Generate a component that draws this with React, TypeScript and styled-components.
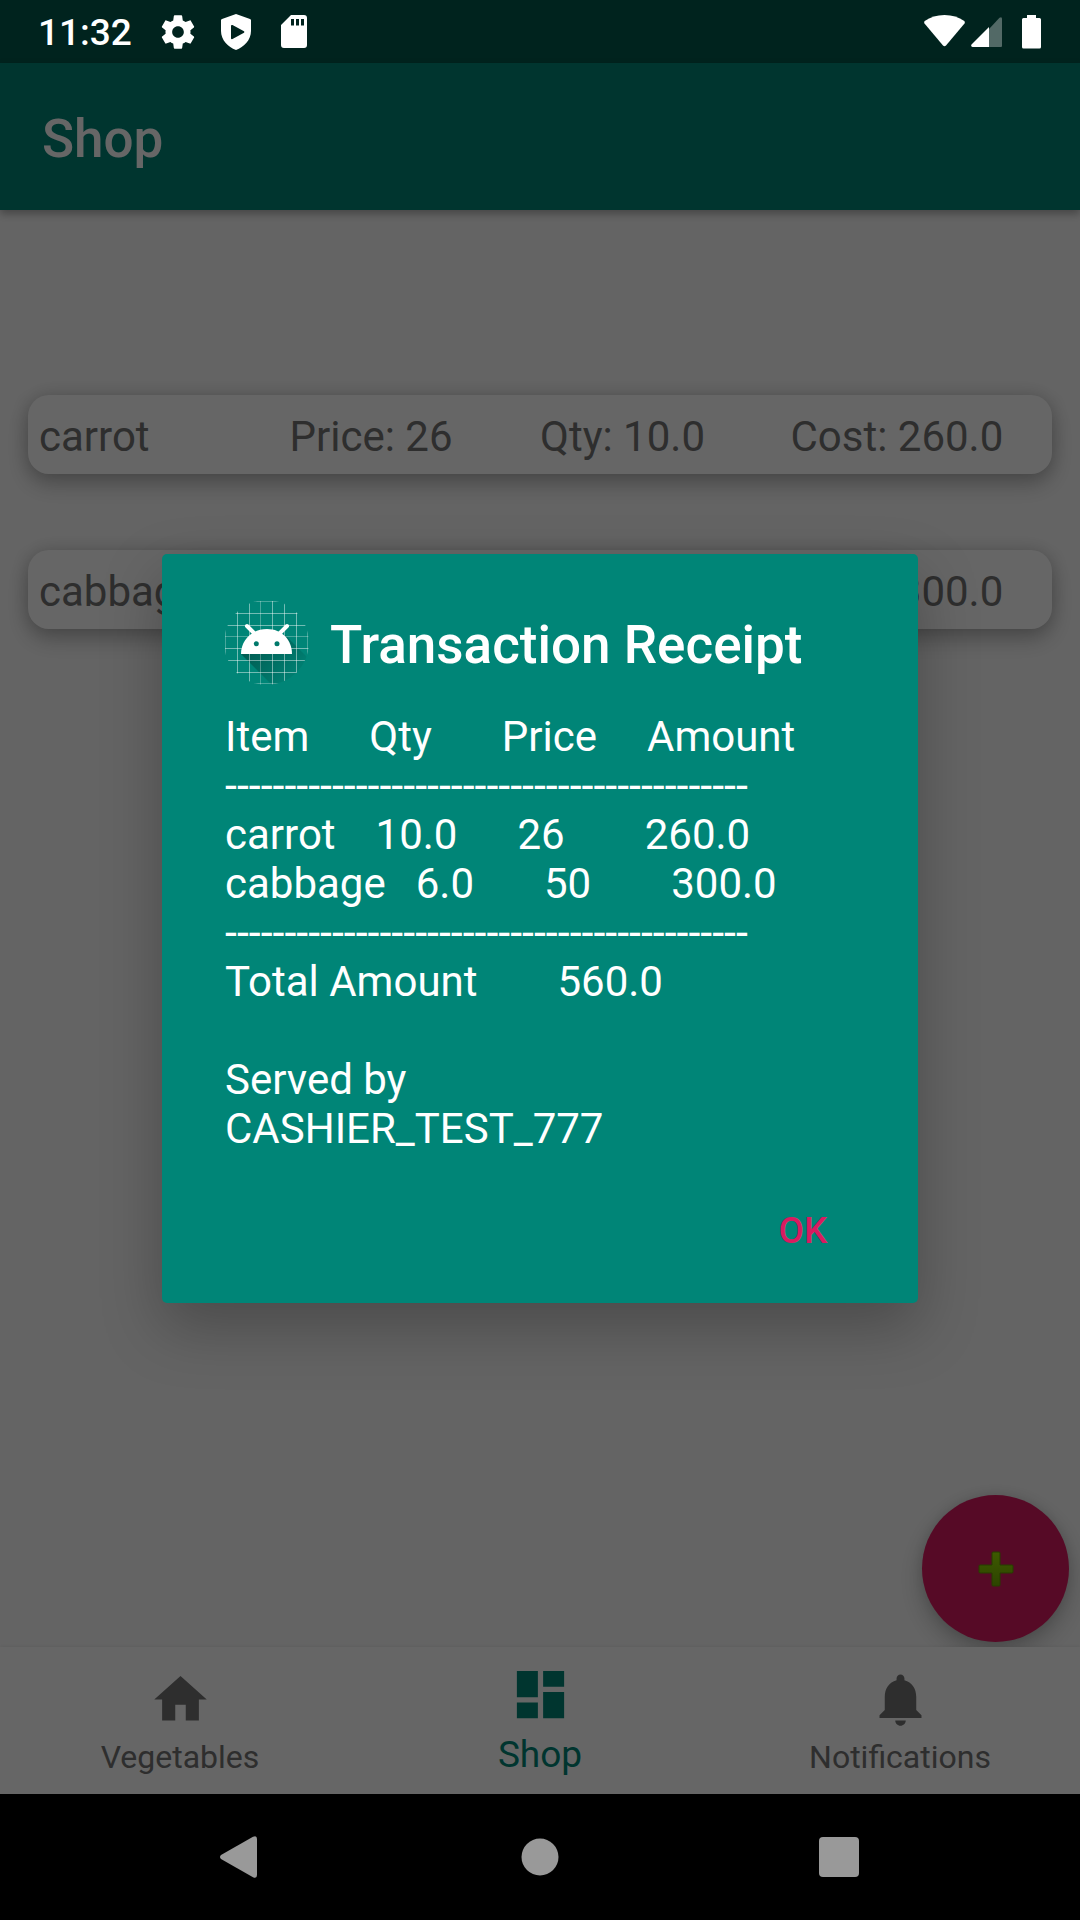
import React from "react";
import styled, { createGlobalStyle } from "styled-components";

const GlobalStyle = createGlobalStyle`
  *, *::before, *::after { box-sizing: border-box; }
  body { margin: 0; background: #000; font-family: Roboto, "Noto Sans", sans-serif; }
  button { font-family: inherit; border: 0; padding: 0; background: none; cursor: pointer; }
  svg { display: block; }
`;

const Device = styled.div`
  min-height: 100vh;
  display: flex;
  flex-direction: column;
`;

const StatusBar = styled.header`
  height: 63px;
  padding: 0 39px 0 38px;
  display: flex;
  align-items: center;
  justify-content: space-between;
  background: #00231e;
  color: #fff;
`;

const StatusGroup = styled.div<{ $gap: number }>`
  display: flex;
  align-items: center;
  gap: ${(p) => p.$gap}px;
`;

const StatusSlot = styled.span`
  width: 58px;
  display: flex;
  justify-content: center;
`;

const Clock = styled.time`
  font-size: 37px;
  font-weight: 500;
  line-height: 44px;
  padding-top: 2px;
  margin-right: 17px;
`;

const Screen = styled.div`
  position: relative;
  flex: 1;
  display: flex;
  flex-direction: column;
  background: #fafafa;
`;

const AppBar = styled.div`
  height: 147px;
  padding: 0 42px;
  display: flex;
  align-items: center;
  background: #008577;
  box-shadow: 0 4px 8px rgba(0, 0, 0, 0.3);
`;

const AppTitle = styled.h1`
  margin: 0;
  padding-top: 4px;
  color: #fff;
  font-size: 53px;
  font-weight: 500;
  line-height: 62px;
`;

const Content = styled.main`
  position: relative;
  flex: 1;
  overflow: hidden;
`;

const ItemList = styled.ul`
  list-style: none;
  margin: 0;
  padding: 185px 28px 0;
  display: flex;
  flex-direction: column;
  gap: 76px;
`;

const ItemCard = styled.li`
  height: 79px;
  padding: 4px 11px 0;
  display: grid;
  grid-template-columns: repeat(4, 1fr);
  align-items: center;
  border-radius: 21px;
  background: #fff;
  color: #737373;
  font-size: 42px;
  line-height: 49px;
  white-space: nowrap;
  box-shadow: 0 10px 22px rgba(0, 0, 0, 0.24), 0 0 18px rgba(0, 0, 0, 0.14);
`;

const AddButton = styled.button`
  position: absolute;
  right: 11px;
  bottom: 5px;
  width: 147px;
  height: 147px;
  border-radius: 50%;
  display: grid;
  place-items: center;
  background: #d81b60;
  box-shadow: 0 10px 24px rgba(0, 0, 0, 0.24), 0 0 12px rgba(0, 0, 0, 0.1);
`;

const BottomNav = styled.nav`
  height: 147px;
  display: grid;
  grid-template-columns: repeat(3, 1fr);
  background: #fff;
  box-shadow: 0 -1px 3px rgba(0, 0, 0, 0.06);
`;

const NavItem = styled.button<{ $active?: boolean }>`
  display: flex;
  flex-direction: column;
  align-items: center;
  justify-content: flex-end;
  gap: ${(p) => (p.$active ? 8 : 7)}px;
  padding-bottom: 18px;
  color: ${(p) => (p.$active ? "#008577" : "#737373")};
  font-size: ${(p) => (p.$active ? 37 : 32)}px;
  line-height: ${(p) => (p.$active ? 42 : 38)}px;
`;

const Overlay = styled.div`
  position: absolute;
  inset: 0;
  display: grid;
  place-items: center;
  background: rgba(0, 0, 0, 0.6);
`;

const Dialog = styled.section`
  width: 70%;
  padding: 47px 31px 10px 63px;
  border-radius: 5px;
  background: #008577;
  color: #fff;
  box-shadow: 0 24px 60px rgba(0, 0, 0, 0.26);
`;

const DialogHeader = styled.div`
  display: flex;
  align-items: center;
  gap: 21px;
  margin-bottom: 27px;
`;

const DialogTitle = styled.h2`
  margin: 0;
  padding-top: 4px;
  font-size: 53px;
  font-weight: 500;
  line-height: 62px;
  white-space: nowrap;
`;

const Receipt = styled.div`
  font-size: 42px;
  line-height: 49px;
  white-space: nowrap;
`;

const ReceiptLine = styled.div`
  display: flex;
  height: 49px;
`;

const RuleLine = styled(ReceiptLine)`
  font-size: 43px;
`;

/* $spaces: how many 10px blanks precede the value on a receipt line */
const Cell = styled.span<{ $spaces: number }>`
  margin-left: ${(p) => p.$spaces * 10}px;
`;

const DialogActions = styled.div`
  display: flex;
  justify-content: flex-end;
  margin-top: 14px;
`;

const TextButton = styled.button`
  min-width: 168px;
  height: 126px;
  padding-top: 2px;
  color: #d81b60;
  font-size: 37px;
  font-weight: 500;
  line-height: 44px;
`;

const SystemBar = styled.footer`
  height: 126px;
  padding: 0 92px;
  display: grid;
  grid-template-columns: repeat(3, 1fr);
  background: #000;
  color: #999;
`;

const SystemButton = styled.button`
  display: grid;
  place-items: center;
  color: inherit;
`;

type GlyphProps = { d: string; size: number };

const Glyph = ({ d, size }: GlyphProps) => (
  <svg width={size} height={size} viewBox="0 0 24 24" fill="currentColor" aria-hidden="true">
    <path d={d} />
  </svg>
);

const HOME = "M10 20v-6h4v6h5v-8h3L12 3 2 12h3v8z";
const DASHBOARD = "M3 13h8V3H3v10zm0 8h8v-6H3v6zm10 0h8V11h-8v10zm0-18v6h8V3h-8z";
const BELL =
  "M12 22c1.1 0 2-.9 2-2h-4c0 1.1.9 2 2 2zm6-6v-5c0-3.07-1.63-5.64-4.5-6.32V4c0-.83-.67-1.5-1.5-1.5s-1.5.67-1.5 1.5v.68C7.64 5.36 6 7.92 6 11v5l-2 2v1h16v-1l-2-2z";
const GEAR =
  "M19.43 12.98c.04-.32.07-.64.07-.98s-.03-.66-.07-.98l2.11-1.65c.19-.15.24-.42.12-.64l-2-3.46c-.12-.22-.39-.3-.61-.22l-2.49 1c-.52-.4-1.08-.73-1.69-.98l-.38-2.65C14.46 2.18 14.25 2 14 2h-4c-.25 0-.46.18-.49.42l-.38 2.65c-.61.25-1.17.59-1.69.98l-2.49-1c-.23-.09-.49 0-.61.22l-2 3.46c-.13.22-.07.49.12.64l2.11 1.65c-.04.32-.07.65-.07.98s.03.66.07.98l-2.11 1.65c-.19.15-.24.42-.12.64l2 3.46c.12.22.39.3.61.22l2.49-1c.52.4 1.08.73 1.69.98l.38 2.65c.03.24.24.42.49.42h4c.25 0 .46-.18.49-.42l.38-2.65c.61-.25 1.17-.59 1.69-.98l2.49 1c.23.09.49 0 .61-.22l2-3.46c.12-.22.07-.49-.12-.64l-2.11-1.65zM12 15.5c-1.93 0-3.5-1.57-3.5-3.5s1.57-3.5 3.5-3.5 3.5 1.57 3.5 3.5-1.57 3.5-3.5 3.5z";

const ShieldIcon = () => (
  <svg width="30" height="36" viewBox="0 0 30 36" fill="#fff" aria-hidden="true">
    <path fillRule="evenodd" d="M15 0 29 5q1 .4 1 1.500V17C30 26 23 33 15 36 7 33 0 26 0 17V6.500Q0 5.400 1 5ZM10 11.500V24.500q.4 1 1.500.5L23 18.700q.8-.7 0-1.400L11.500 11q-1.200-.4-1.500.5Z" />
  </svg>
);

const SdCardIcon = () => (
  <svg width="26" height="34" viewBox="0 0 26 34" fill="#fff" aria-hidden="true">
    <path fillRule="evenodd" d="M10 0H23q3 0 3 3V30q0 3-3 3H3q-3 0-3-3V10ZM10 4V10.500h3V4ZM15 4V10.500h3V4ZM20 4V10.500h3V4Z" />
  </svg>
);

const WifiIcon = () => (
  <svg width="41" height="34" viewBox="0 0 41 34" fill="#fff" aria-hidden="true">
    <path d="M20.500 0Q32 0 40.300 6q1 1.200.2 2.400L22 30.500q-1.500 1.500-3 0L.5 8.400Q-.3 7.200.7 6 9 0 20.500 0Z" />
  </svg>
);

const SignalIcon = () => (
  <svg width="31" height="34" viewBox="0 0 31 34" fill="#fff" aria-hidden="true">
    <path opacity=".32" d="M18 14 28.500 2.800Q31 1 31 4V31q0 1-1 1H18Z" />
    <path d="M18 12V32H1.500Q-.5 31.500.5 29.500Z" />
  </svg>
);

const BatteryIcon = () => (
  <svg width="19" height="34" viewBox="0 0 19 34" fill="#fff" aria-hidden="true">
    <path d="M5 0h9v3h3.500Q19 3 19 4.500V32q0 1.500-1.500 1.500h-16Q0 33.500 0 32V4.500Q0 3 1.500 3H5Z" />
  </svg>
);

const PlusIcon = () => (
  <svg width="36" height="36" viewBox="0 0 36 36" aria-hidden="true">
    <defs>
      <linearGradient id="plusFill" x1="0" y1="0" x2="0" y2="1">
        <stop offset="0" stopColor="#9be000" />
        <stop offset="1" stopColor="#6fa800" />
      </linearGradient>
    </defs>
    <path
      fill="url(#plusFill)"
      stroke="#5f9400"
      strokeWidth="1"
      d="M15 1h6q1 0 1 1v12h12q1 0 1 1v6q0 1-1 1H22v12q0 1-1 1h-6q-1 0-1-1V22H2q-1 0-1-1v-6q0-1 1-1h12V2q0-1 1-1Z"
    />
  </svg>
);

const GRID_STEPS = [0.5, 12.5, 24.5, 35.5, 47.5, 59.5, 71.5, 82.5];

const AndroidLogo = () => (
  <svg width="84" height="84" viewBox="0 0 84 84" aria-hidden="true">
    <defs>
      <clipPath id="logoDisc">
        <circle cx="41.500" cy="41.500" r="42.500" />
      </clipPath>
      <linearGradient id="logoShade" gradientUnits="userSpaceOnUse" x1="32" y1="44" x2="62" y2="76">
        <stop offset="0" stopColor="#000" stopOpacity=".3" />
        <stop offset="1" stopColor="#000" stopOpacity=".06" />
      </linearGradient>
    </defs>
    <g clipPath="url(#logoDisc)">
      <path d="M16 53 60 34 86 60V84H47Z" fill="url(#logoShade)" />
      {GRID_STEPS.map((p, i) => (
        <path
          key={p}
          d={`M${p} 0V84M0 ${p}H84`}
          stroke="#fff"
          strokeWidth="1"
          strokeOpacity={i === 0 || i === 3 || i === 7 ? 0.28 : 0.45}
        />
      ))}
    </g>
    <path d="M22 25 29 32M62 25 55 32" stroke="#fff" strokeWidth="4" strokeLinecap="round" />
    <path d="M16 53C16 39 27 28 42 28S67 39 67 53Z" fill="#fff" />
    <circle cx="31.300" cy="42.700" r="2.500" fill="#00796b" />
    <circle cx="52" cy="42.700" r="2.500" fill="#00796b" />
  </svg>
);

const items = [
  { name: "carrot", price: "26", qty: "10.0", cost: "260.0" },
  { name: "cabbage", price: "50", qty: "6.0", cost: "300.0" },
];

const RULE = "-".repeat(44);

type ReceiptRow = { cells: string[]; spaces: number[] };

const headerRow: ReceiptRow = { cells: ["Item", "Qty", "Price", "Amount"], spaces: [0, 6, 7, 5] };
const itemRows: ReceiptRow[] = [
  { cells: ["carrot", "10.0", "26", "260.0"], spaces: [0, 4, 6, 8] },
  { cells: ["cabbage", "6.0", "50", "300.0"], spaces: [0, 3, 7, 8] },
];
const totalRow: ReceiptRow = { cells: ["Total Amount", "560.0"], spaces: [0, 8] };

const Line = ({ row }: { row: ReceiptRow }) => (
  <ReceiptLine>
    {row.cells.map((text, i) => (
      <Cell key={text} $spaces={row.spaces[i]}>
        {text}
      </Cell>
    ))}
  </ReceiptLine>
);

export default function App() {
  return (
    <>
      <GlobalStyle />
      <Device>
        <StatusBar>
          <StatusGroup $gap={0}>
            <Clock>11:32</Clock>
            <StatusSlot>
              <Glyph d={GEAR} size={40} />
            </StatusSlot>
            <StatusSlot>
              <ShieldIcon />
            </StatusSlot>
            <StatusSlot>
              <SdCardIcon />
            </StatusSlot>
          </StatusGroup>
          <StatusGroup $gap={20}>
            <StatusGroup $gap={6}>
              <WifiIcon />
              <SignalIcon />
            </StatusGroup>
            <BatteryIcon />
          </StatusGroup>
        </StatusBar>

        <Screen>
          <AppBar>
            <AppTitle>Shop</AppTitle>
          </AppBar>
          <Content>
            <ItemList>
              {items.map((item) => (
                <ItemCard key={item.name}>
                  <span>{item.name}</span>
                  <span>Price: {item.price}</span>
                  <span>Qty: {item.qty}</span>
                  <span>Cost: {item.cost}</span>
                </ItemCard>
              ))}
            </ItemList>
            <AddButton aria-label="Add item">
              <PlusIcon />
            </AddButton>
          </Content>
          <BottomNav>
            <NavItem>
              <Glyph d={HOME} size={63} />
              Vegetables
            </NavItem>
            <NavItem $active aria-current="page">
              <Glyph d={DASHBOARD} size={63} />
              Shop
            </NavItem>
            <NavItem>
              <Glyph d={BELL} size={63} />
              Notifications
            </NavItem>
          </BottomNav>

          <Overlay>
            <Dialog role="dialog" aria-modal="true" aria-labelledby="receipt-title">
              <DialogHeader>
                <AndroidLogo />
                <DialogTitle id="receipt-title">Transaction Receipt</DialogTitle>
              </DialogHeader>
              <Receipt>
                <Line row={headerRow} />
                <RuleLine>{RULE}</RuleLine>
                {itemRows.map((row) => (
                  <Line key={row.cells[0]} row={row} />
                ))}
                <RuleLine>{RULE}</RuleLine>
                <Line row={totalRow} />
                <ReceiptLine />
                <ReceiptLine>Served by</ReceiptLine>
                <ReceiptLine>CASHIER_TEST_777</ReceiptLine>
              </Receipt>
              <DialogActions>
                <TextButton>OK</TextButton>
              </DialogActions>
            </Dialog>
          </Overlay>
        </Screen>

        <SystemBar>
          <SystemButton aria-label="Back">
            <svg width="42" height="42" viewBox="0 0 42 42" fill="currentColor" aria-hidden="true">
              <path d="M1 19 33 .8Q37 -1 37 3V39q0 4-4 2.200L1 23q-2-2 0-4Z" />
            </svg>
          </SystemButton>
          <SystemButton aria-label="Home">
            <svg width="38" height="38" viewBox="0 0 38 38" fill="currentColor" aria-hidden="true">
              <circle cx="19" cy="19" r="18.500" />
            </svg>
          </SystemButton>
          <SystemButton aria-label="Recent apps">
            <svg width="40" height="40" viewBox="0 0 40 40" fill="currentColor" aria-hidden="true">
              <rect width="40" height="40" rx="4" />
            </svg>
          </SystemButton>
        </SystemBar>
      </Device>
    </>
  );
}
